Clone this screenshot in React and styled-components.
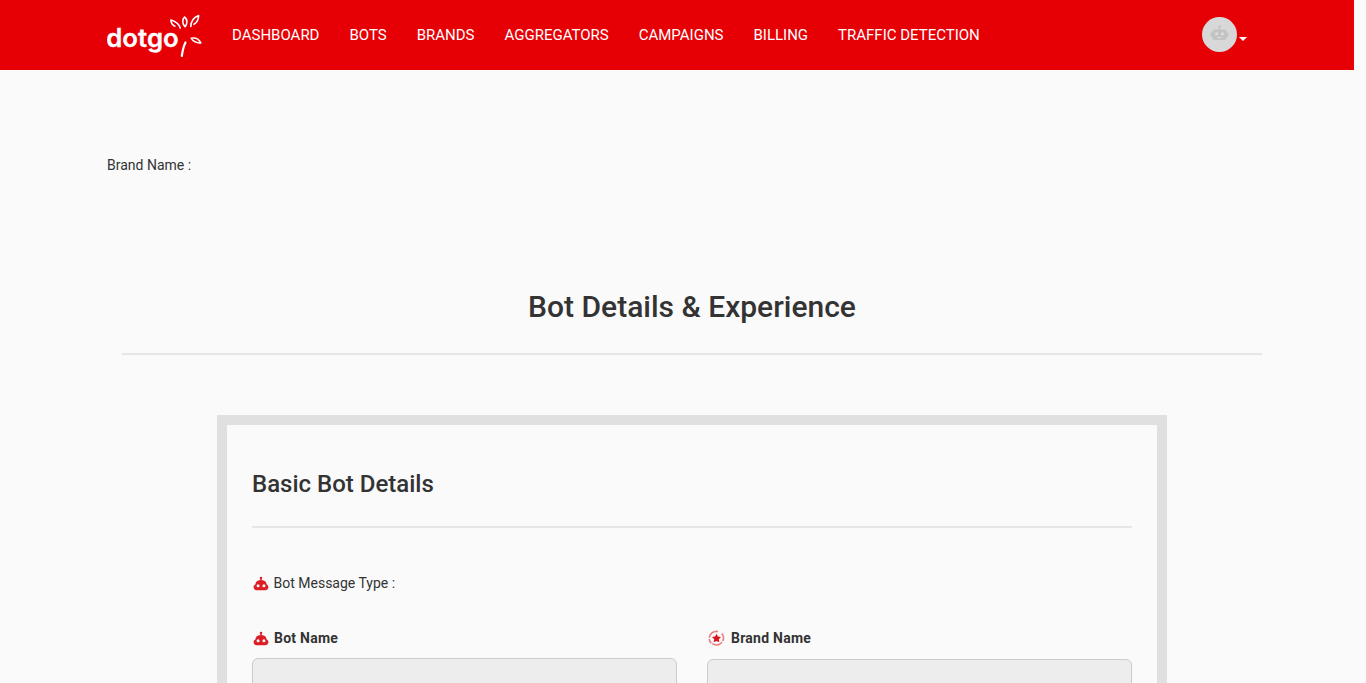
import React from "react";
import styled, { createGlobalStyle } from "styled-components";

const GlobalStyle = createGlobalStyle`
  *, *::before, *::after { box-sizing: border-box; }
  html { overflow: hidden; }
  body {
    margin: 0;
    height: 683px;
    overflow: hidden;
    background: #fafafa;
    color: #333;
    font: 14px/20px Roboto, "Liberation Sans", sans-serif;
  }
`;

const Page = styled.div`
  height: 683px;
  overflow: hidden;
`;

const Header = styled.header`
  display: flex;
  align-items: center;
  width: 1354px;
  height: 70px;
  padding: 0 107px;
  background: #e60005;
`;

const Logo = styled.svg`
  display: block;
  flex: none;
  width: 95px;
  height: 46px;
  margin-right: 30px;
`;

const LogoText = styled.text`
  font: 600 25.5px Inter, sans-serif;
  fill: #fff;
  stroke: #fff;
  stroke-width: 0.3px;
`;

const Nav = styled.nav`
  display: flex;
  gap: 30px;
`;

const NavLink = styled.a`
  color: #fff;
  font-size: 15px;
  line-height: 20px;
  white-space: nowrap;
`;

const Account = styled.div`
  display: flex;
  align-items: center;
  gap: 2px;
  margin-left: auto;
`;

const Avatar = styled.svg`
  display: block;
  width: 35px;
  height: 35px;
  margin-bottom: 1px;
`;

const Caret = styled.span`
  margin-top: 8px;
  border: 4px solid transparent;
  border-top-color: #fff;
  border-bottom: 0;
`;

const Main = styled.main`
  display: flex;
  flex-direction: column;
  width: 1170px;
  margin-left: 107px;
  padding-top: 85px;
`;

const Title = styled.h2`
  margin: 114px 15px 0;
  padding-bottom: 28px;
  border-bottom: 2px solid #e6e6e6;
  font-size: 30px;
  font-weight: 500;
  line-height: 36px;
  text-align: center;
`;

const Panel = styled.section`
  width: 950px;
  height: 400px;
  margin: 60px auto 0;
  padding: 43px 25px 0;
  border: 10px solid #e0e0e0;
`;

const PanelTitle = styled.h3`
  margin: 0;
  padding-bottom: 26px;
  border-bottom: 2px solid #e6e6e6;
  font-size: 24px;
  font-weight: 500;
  line-height: 32px;
`;

const Label = styled.div`
  display: flex;
  align-items: center;
  gap: ${(p) => p.$gap || 4}px;
  height: 20px;
  font-weight: ${(p) => (p.$bold ? 700 : 400)};
  letter-spacing: ${(p) => (p.$bold ? "0.25px" : "normal")};
`;

const MessageType = styled(Label)`
  margin-top: 45px;
`;

const Fields = styled.div`
  display: grid;
  grid-template-columns: 425px 425px;
  gap: 30px;
  margin-top: 35px;
`;

const Input = styled.input`
  display: block;
  width: 100%;
  height: 50px;
  margin-top: ${(p) => p.$offset}px;
  border: 1px solid #ccc;
  border-radius: 6px;
  background: #ededed;
`;

const Icon = styled.svg`
  display: block;
  flex: none;
  width: 18px;
  height: 18px;
`;

const BotIcon = () => (
  <Icon viewBox="0 0 18 18">
    <path
      fill="#dc1f26"
      fillRule="evenodd"
      d="M8.300 6V4.900a1.200 1.200 0 1 1 1.400 0V6c2.900.2 4.700 1.900 5 4.400 1.100.5 1.700 1.400 1.700 2.600 0 1.900-1.200 3.200-3.200 3.200H4.800c-2 0-3.200-1.300-3.200-3.200 0-1.200.6-2.100 1.700-2.600.3-2.500 2.100-4.200 5-4.400ZM6.100 10.200a1.500 1.500 0 1 0 0 3 1.500 1.500 0 0 0 0-3ZM11.900 10.200a1.500 1.500 0 1 0 0 3 1.500 1.500 0 0 0 0-3Z"
    />
  </Icon>
);

const BrandIcon = () => (
  <Icon viewBox="0 0 18 18">
    <g fill="none" stroke="#e87d82" strokeWidth="1.600">
      <path d="M2.300 8.700C2.600 4.500 6.500 1.800 11 2.500" />
      <path d="M14.800 4.600c2 2.400 2.200 5 .9 7.400" />
      <path d="M15 13.100c-2.300 3.200-6.800 3.700-9.800 1.600" />
      <path d="M4.400 14.200C2.900 13 2.200 11.500 2.200 9.900" />
    </g>
    <path
      fill="#d9141c"
      d="m9.500 4.800 1.400 2.700 3.100.5-2.200 2.200.5 3.100-2.800-1.400-2.800 1.400.5-3.100L5 8l3.100-.5Z"
    />
  </Icon>
);

const DotgoLogo = () => (
  <Logo viewBox="0 0 95 46" role="img" aria-label="dotgo">
    <LogoText x="-0.800" y="35.200" textLength="72.600" lengthAdjust="spacingAndGlyphs">
      dotgo
    </LogoText>
    <g fill="none" stroke="#fff" strokeWidth="1.600" strokeLinecap="round" strokeLinejoin="round">
      <path d="M73.200 16c-1-4-4.500-6.500-9.300-8 0 3 1.500 5 4 6.200" />
      <path d="M78 14.700c-2.700-2.600-3-7.500-.5-9.700 3 2.200 3.200 7 .5 9.700Z" />
      <path d="M83.800 14.500c0-5 3-9 7.800-11 0 4.300-1.700 7-4.600 8.800" />
      <path d="M84.200 26.200c4-.7 7.800 1 9.600 4.700-4.300.3-7.500-1.200-9.600-4.700Z" />
      <path strokeWidth="2.200" d="M78.500 30.500c-2 4-3 8.500-3.700 13.500" />
    </g>
  </Logo>
);

const UserAvatar = () => (
  <Avatar viewBox="0 0 35 35">
    <circle cx="17.500" cy="17.500" r="17.500" fill="#d8d8d8" />
    <g fill="#c3c3c3">
      <circle cx="17.500" cy="9.700" r="1.400" />
      <path d="M17 10h1v3h-1z" />
      <rect x="8.500" y="15" width="18" height="5.500" rx="2" />
      <rect x="10.500" y="12.500" width="14" height="10.500" rx="2" />
    </g>
    <g fill="#dedede">
      <circle cx="14.500" cy="16.700" r="1.500" />
      <circle cx="20.500" cy="16.700" r="1.500" />
      <path d="M15.500 20h4v1h-4z" />
    </g>
  </Avatar>
);

const LINKS = ["DASHBOARD", "BOTS", "BRANDS", "AGGREGATORS", "CAMPAIGNS", "BILLING", "TRAFFIC DETECTION"];

export default function App() {
  return (
    <Page>
      <GlobalStyle />
      <Header>
        <DotgoLogo />
        <Nav>
          {LINKS.map((link) => (
            <NavLink key={link}>{link}</NavLink>
          ))}
        </Nav>
        <Account>
          <UserAvatar />
          <Caret />
        </Account>
      </Header>
      <Main>
        <div>Brand Name :</div>
        <Title>Bot Details &amp; Experience</Title>
        <Panel>
          <PanelTitle>Basic Bot Details</PanelTitle>
          <MessageType $gap={3.5}>
            <BotIcon />
            Bot Message Type :
          </MessageType>
          <Fields>
            <div>
              <Label $bold>
                <BotIcon />
                Bot Name
              </Label>
              <Input $offset={10} disabled />
            </div>
            <div>
              <Label $bold $gap={6}>
                <BrandIcon />
                Brand Name
              </Label>
              <Input $offset={11} disabled />
            </div>
          </Fields>
        </Panel>
      </Main>
    </Page>
  );
}
